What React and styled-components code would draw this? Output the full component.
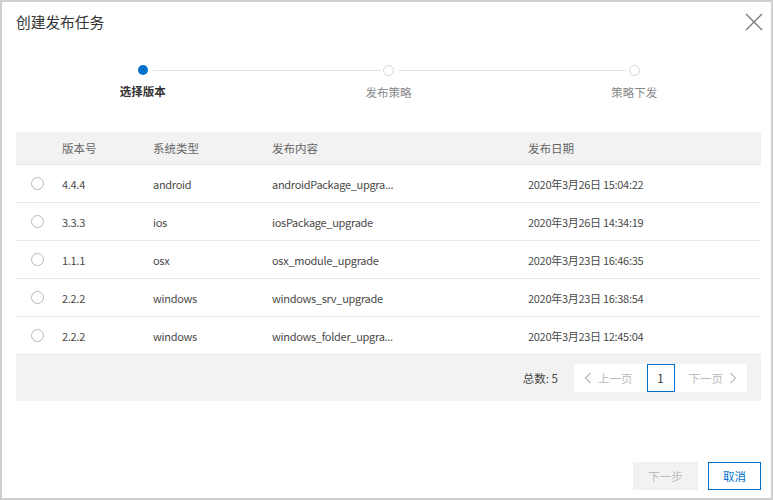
import React from "react"
import styled, { createGlobalStyle } from "styled-components"

const GlobalStyle = createGlobalStyle`
  body {
    margin: 0;
    background: #fff;
    font-family: "Noto Sans CJK SC", sans-serif;
  }
`

const blue = "#0070cc"

const Dialog = styled.div`
  width: 773px;
  height: 500px;
  box-sizing: border-box;
  border: 2px solid #cfcfcf;
  display: flex;
  flex-direction: column;
  padding: 0 10px 8px 14px;
  background: #fff;
  color: #333;
`

const Header = styled.div`
  height: 38px;
  display: flex;
  align-items: center;
  justify-content: space-between;
`

const Title = styled.span`
  font-size: 14.7px;
  color: #333;
`

const CloseButton = styled.button`
  border: 0;
  background: none;
  padding: 0;
  margin: 2px -2px 0 0;
  width: 18px;
  height: 18px;
  display: flex;
  cursor: pointer;
`

const Steps = styled.div`
  display: grid;
  grid-template-columns: repeat(3, 1fr);
  margin: 25px 4px 0;
`

const Step = styled.div`
  position: relative;
  display: flex;
  flex-direction: column;
  align-items: center;

  &::before,
  &::after {
    content: "";
    position: absolute;
    top: 5px;
    height: 1px;
    background: #e3e3e3;
  }
  &::before {
    left: 0;
    right: calc(50% + 8px);
    display: ${(p) => (p.$first ? "none" : "block")};
  }
  &::after {
    left: calc(50% + 10px);
    right: 0;
    display: ${(p) => (p.$last ? "none" : "block")};
  }
`

const Dot = styled.span`
  box-sizing: border-box;
  width: ${(p) => (p.$active ? "10px" : "11px")};
  height: ${(p) => (p.$active ? "10px" : "11px")};
  border-radius: 50%;
  background: ${(p) => (p.$active ? blue : "#fff")};
  border: ${(p) => (p.$active ? "none" : "1px solid #d6d6d6")};
`

const StepLabel = styled.span`
  margin-top: 7px;
  font-size: 11.5px;
  line-height: 18px;
  font-weight: ${(p) => (p.$active ? 600 : 400)};
  color: ${(p) => (p.$active ? "#333" : "#888")};
`

const Table = styled.div`
  margin-top: 31px;
  font-size: 11.5px;
`

const cols = "46px 91px 119px 256px 1fr"

const HeadRow = styled.div`
  display: grid;
  grid-template-columns: ${cols};
  align-items: center;
  height: 32px;
  background: #f2f2f2;
  color: #666;
  border-bottom: 1px solid #e8e8e8;
`

const Row = styled.div`
  display: grid;
  grid-template-columns: ${cols};
  align-items: center;
  height: 37px;
  border-bottom: 1px solid #e8e8e8;
  color: #4a4a4a;
  font-size: 11px;
  letter-spacing: -0.3px;
`

const Radio = styled.span`
  box-sizing: border-box;
  width: 13px;
  height: 13px;
  margin-left: 15px;
  border-radius: 50%;
  border: 1px solid #b8b8b8;
  background: #fff;
`

const TableFooter = styled.div`
  height: 46px;
  background: #f2f2f2;
  display: flex;
  align-items: center;
  justify-content: flex-end;
  padding-right: 14px;
  gap: 16px;
`

const Total = styled.span`
  font-size: 11.5px;
  color: #444;
`

const Pager = styled.div`
  width: 173px;
  height: 28px;
  box-sizing: border-box;
  background: #fff;
  display: flex;
  align-items: center;
  justify-content: space-between;
  padding: 0 10px;
`

const PageLink = styled.span`
  display: flex;
  align-items: center;
  gap: 6px;
  font-size: 11.5px;
  color: #bbb;
`

const PageNum = styled.span`
  box-sizing: border-box;
  width: 28px;
  height: 28px;
  border: 1px solid ${blue};
  display: flex;
  align-items: center;
  justify-content: center;
  font-size: 11.5px;
  color: #333;
`

const Spacer = styled.div`
  flex: 1;
`

const Actions = styled.div`
  display: flex;
  justify-content: flex-end;
  gap: 10px;
`

const Button = styled.button`
  box-sizing: border-box;
  height: 28px;
  width: ${(p) => p.$width}px;
  font-family: "Noto Sans CJK SC", sans-serif;
  font-size: 11.5px;
  background: ${(p) => (p.$disabled ? "#f2f2f2" : "#fff")};
  color: ${(p) => (p.$disabled ? "#bbb" : blue)};
  border: 1px solid ${(p) => (p.$disabled ? "#f2f2f2" : blue)};
  cursor: ${(p) => (p.$disabled ? "not-allowed" : "pointer")};
  padding: 0;
`

const Chevron = ({ dir }) => (
  <svg width="8" height="12" viewBox="0 0 8 12">
    <polyline
      points={dir === "left" ? "6.5,1 1.5,6 6.5,11" : "1.5,1 6.5,6 1.5,11"}
      fill="none"
      stroke="#bbb"
      strokeWidth="1.2"
    />
  </svg>
)

const steps = ["选择版本", "发布策略", "策略下发"]

const rows = [
  ["4.4.4", "android", "androidPackage_upgra...", "2020年3月26日 15:04:22"],
  ["3.3.3", "ios", "iosPackage_upgrade", "2020年3月26日 14:34:19"],
  ["1.1.1", "osx", "osx_module_upgrade", "2020年3月23日 16:46:35"],
  ["2.2.2", "windows", "windows_srv_upgrade", "2020年3月23日 16:38:54"],
  ["2.2.2", "windows", "windows_folder_upgra...", "2020年3月23日 12:45:04"],
]

export default function App() {
  return (
    <>
      <GlobalStyle />
      <Dialog>
        <Header>
          <Title>创建发布任务</Title>
          <CloseButton aria-label="close">
            <svg width="18" height="18" viewBox="0 0 18 18">
              <path d="M1 1 L17 17 M17 1 L1 17" stroke="#777" strokeWidth="1.3" />
            </svg>
          </CloseButton>
        </Header>

        <Steps>
          {steps.map((s, i) => (
            <Step key={s} $first={i === 0} $last={i === steps.length - 1}>
              <Dot $active={i === 0} />
              <StepLabel $active={i === 0}>{s}</StepLabel>
            </Step>
          ))}
        </Steps>

        <Table>
          <HeadRow>
            <span />
            <span>版本号</span>
            <span>系统类型</span>
            <span>发布内容</span>
            <span>发布日期</span>
          </HeadRow>
          {rows.map((r, i) => (
            <Row key={i}>
              <Radio />
              {r.map((c, j) => (
                <span key={j}>{c}</span>
              ))}
            </Row>
          ))}
          <TableFooter>
            <Total>总数: 5</Total>
            <Pager>
              <PageLink>
                <Chevron dir="left" />
                上一页
              </PageLink>
              <PageNum>1</PageNum>
              <PageLink>
                下一页
                <Chevron dir="right" />
              </PageLink>
            </Pager>
          </TableFooter>
        </Table>

        <Spacer />

        <Actions>
          <Button $width={65} $disabled>下一步</Button>
          <Button $width={53}>取消</Button>
        </Actions>
      </Dialog>
    </>
  )
}
